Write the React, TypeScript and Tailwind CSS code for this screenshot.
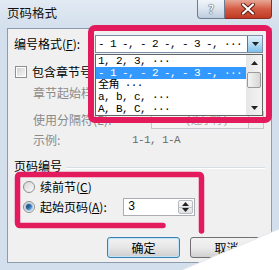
import React from "react";

const mono =
  "font-['Liberation_Mono','Noto_Sans_CJK_SC',monospace] text-[11px] tracking-[-0.6px] whitespace-pre leading-[12px]";

function Radio({ checked }: { checked?: boolean }) {
  return (
    <div className="w-[12px] h-[12px] rounded-full border border-[#8e8f8f] bg-gradient-to-br from-[#d6d6d6] to-[#fbfbfb] flex items-center justify-center shrink-0">
      {checked && (
        <div className="w-[6px] h-[6px] rounded-full bg-gradient-to-br from-[#17436f] via-[#2a6aa6] to-[#8ec3ea] ring-1 ring-[#9fc3df]" />
      )}
    </div>
  );
}

function Arrow({ dir }: { dir: "up" | "down" }) {
  return (
    <svg width="7" height="4" viewBox="0 0 7 4">
      {dir === "down" ? (
        <polygon points="0,0 7,0 3.5,4" fill="#222" />
      ) : (
        <polygon points="0,4 7,4 3.5,0" fill="#222" />
      )}
    </svg>
  );
}

export default function App() {
  const items = ["1, 2, 3, ···", "- 1 -, - 2 -, - 3 -, ···", "全角 ···", "a, b, c, ···", "A, B, C, ···"];
  return (
    <div className="relative w-[279px] h-[270px] overflow-hidden bg-[#d3dfec] font-['Noto_Sans_CJK_SC',sans-serif] text-[12px] text-black flex flex-col select-none">
      {/* title bar */}
      <div className="h-[28px] shrink-0 flex items-start bg-gradient-to-b from-[#e2eaf3] to-[#d3dfec]">
        <div className="flex-1 pl-[7px] pt-[5px] text-[12.5px] leading-[16px] text-[#111]">页码格式</div>
        <div className="flex mr-[7px]">
          <div className="w-[28px] h-[19px] rounded-bl-[4px] border border-t-0 border-[#6c7c90] bg-gradient-to-b from-[#f1f5fa] via-[#dbe4ef] to-[#bccbdd] flex items-center justify-center">
            <span className="text-[12px] leading-[12px] font-bold text-[#f4f4f4] [text-shadow:0_0_1px_#2c3e55,0_0_1px_#2c3e55]">?</span>
          </div>
          <div className="w-[47px] h-[19px] rounded-br-[4px] border border-t-0 border-l-0 border-[#8a2c1f] bg-gradient-to-b from-[#e7a696] via-[#d45a43] to-[#c03a24] flex items-center justify-center">
            <svg width="14" height="12" viewBox="0 0 14 12">
              <path d="M2 1.5 L12 10.5 M12 1.5 L2 10.5" stroke="#5a1a10" strokeWidth="4" strokeLinecap="round" />
              <path d="M2 1.5 L12 10.5 M12 1.5 L2 10.5" stroke="#ffffff" strokeWidth="2.2" strokeLinecap="round" />
            </svg>
          </div>
        </div>
      </div>

      {/* client area */}
      <div className="relative mx-[7px] h-[235px] shrink-0 border border-[#8d9bad] bg-[#f0f0f0] flex flex-col">
        {/* row 1 */}
        <div className="mt-[6px] h-[18px] flex items-center pl-[6px]">
          <div className="w-[81px] leading-[16px]">
            编号格式(<span className="underline">F</span>):
          </div>
          <div className="w-[168px] h-[18px] border border-[#7b8ea5] bg-white flex">
            <div className={`${mono} flex-1 pl-[2px] pt-[2px]`}>- 1 -, - 2 -, - 3 -, ···</div>
            <div className="w-[15px] h-full border-l border-[#3c7fb1] bg-gradient-to-b from-[#e3f2fc] via-[#b5dcf5] to-[#7ec0e8] flex items-center justify-center">
              <Arrow dir="down" />
            </div>
          </div>
        </div>

        {/* row 2 checkbox */}
        <div className="mt-[11px] h-[16px] flex items-center pl-[7px]">
          <div className="w-[12px] h-[12px] border border-[#8e8f8f] bg-white p-[1px]">
            <div className="w-full h-full bg-gradient-to-br from-[#d2d2d2] to-[#f6f6f6]" />
          </div>
          <span className="ml-[5px] leading-[16px]">包含章节号</span>
        </div>

        {/* row 3 (rest of label hidden beneath the open list) */}
        <div className="mt-[5px] h-[16px] flex items-center pl-[25px] text-[#8a8a8a]">
          <span className="leading-[16px] whitespace-nowrap">章节起始样</span>
        </div>

        {/* row 4 */}
        <div className="mt-[10px] h-[18px] flex items-center pl-[25px] text-[#8a8a8a]">
          <span className="leading-[16px]">使用分隔符(E):</span>
          <div className="ml-auto mr-[7px] w-[113px] h-[18px] border border-[#c4c8cc] bg-[#f4f4f4] flex">
            <div className={`${mono} flex-1 pl-[3px] pt-[3px] text-[#a8a8a8]`}>-    (连字符)</div>
            <div className="w-[15px] h-full border-l border-[#c4c8cc] bg-[#f0f0f0]" />
          </div>
        </div>

        {/* row 5 */}
        <div className="mt-[3px] h-[16px] flex items-center pl-[25px] text-[#8a8a8a]">
          <span className="w-[99px] leading-[16px]">示例:</span>
          <span className={`${mono} text-[#6a6a6a]`}>1-1, 1-A</span>
        </div>

        {/* row 6 */}
        <div className="mt-[10px] h-[16px] flex items-center pl-[6px] pr-[6px]">
          <span className="leading-[16px]">页码编号</span>
          <div className="flex-1 ml-[4px] mt-[4px] h-[2px] border-t border-[#d5dfe5] border-b border-b-white" />
        </div>

        {/* row 7 */}
        <div className="mt-[5px] h-[16px] flex items-center pl-[15px]">
          <Radio />
          <span className="ml-[5px] leading-[16px]">
            续前节(<span className="underline">C</span>)
          </span>
        </div>

        {/* row 8 */}
        <div className="mt-[3px] h-[18px] flex items-center pl-[15px]">
          <Radio checked />
          <span className="ml-[5px] w-[83px] leading-[16px]">
            起始页码(<span className="underline">A</span>):
          </span>
          <div className="w-[72px] h-[18px] border border-[#abadb3] bg-white flex">
            <div className="flex-1 pl-[4px] text-[12px] leading-[16px] font-['Liberation_Mono',monospace]">3</div>
            <div className="w-[15px] my-[1px] mr-[1px] flex flex-col border border-[#b5bcc4] rounded-[2px] bg-gradient-to-b from-[#f7f7f7] to-[#e2e2e2]">
              <div className="flex-1 flex items-center justify-center border-b border-[#c3c7cc]">
                <Arrow dir="up" />
              </div>
              <div className="flex-1 flex items-center justify-center">
                <Arrow dir="down" />
              </div>
            </div>
          </div>
        </div>

        {/* row 9 buttons */}
        <div className="mt-[21px] h-[21px] flex justify-end gap-[10px] pr-[8px]">
          <div className="w-[73px] h-[21px] rounded-[3px] border border-[#3c7fb1] bg-gradient-to-b from-[#f2f2f2] via-[#e6e6e6] to-[#cfcfcf] flex items-center justify-center ring-1 ring-inset ring-[#bfe3f7]">
            <span className="leading-[16px]">确定</span>
          </div>
          <div className="w-[73px] h-[21px] rounded-[3px] border border-[#707070] bg-gradient-to-b from-[#f2f2f2] via-[#ebebeb] to-[#d0d0d0] flex items-center justify-center">
            <span className="leading-[16px]">取消</span>
          </div>
        </div>

        {/* dropdown list */}
        <div className="absolute left-[87px] top-[25px] w-[168px] h-[62px] border border-[#646464] bg-white flex">
          <div className="flex-1 flex flex-col">
            {items.map((t, i) => (
              <div
                key={t}
                className={`${mono} h-[12px] overflow-hidden pl-[2px] ${i === 1 ? "bg-[#3399ff] text-white" : "text-black"}`}
              >
                {t}
              </div>
            ))}
          </div>
          <div className="w-[16px] h-full bg-gradient-to-r from-[#e6e6e6] to-[#f4f4f4] flex flex-col items-center">
            <div className="h-[15px] flex items-center justify-center">
              <Arrow dir="up" />
            </div>
            <div className="mt-[2px] w-[14px] h-[16px] rounded-[2px] border border-[#9a9a9a] bg-gradient-to-r from-[#f4f4f4] to-[#d6d6d6]" />
            <div className="flex-1" />
            <div className="h-[15px] flex items-center justify-center">
              <Arrow dir="down" />
            </div>
          </div>
        </div>
      </div>

      {/* annotations */}
      <svg className="absolute inset-0 pointer-events-none" width="279" height="270" viewBox="0 0 279 270">
        <rect x="91" y="28" width="178" height="92" rx="4" fill="none" stroke="#e31b5d" strokeWidth="6" />
        <path
          d="M163 225.5 H20.5 Q17.5 225.5 17.5 222.5 V177.5 Q17.5 174.5 20.5 174.5 H198.5 Q201.5 174.5 201.5 177.5 V231"
          fill="none"
          stroke="#e31b5d"
          strokeWidth="5.5"
          strokeLinecap="round"
          strokeLinejoin="round"
        />
        <polygon points="279,229 279,270 182,270" fill="#ffffff" />
        <line x1="279" y1="229" x2="182" y2="270" stroke="#e3e7ec" strokeWidth="1" />
      </svg>
    </div>
  );
}
